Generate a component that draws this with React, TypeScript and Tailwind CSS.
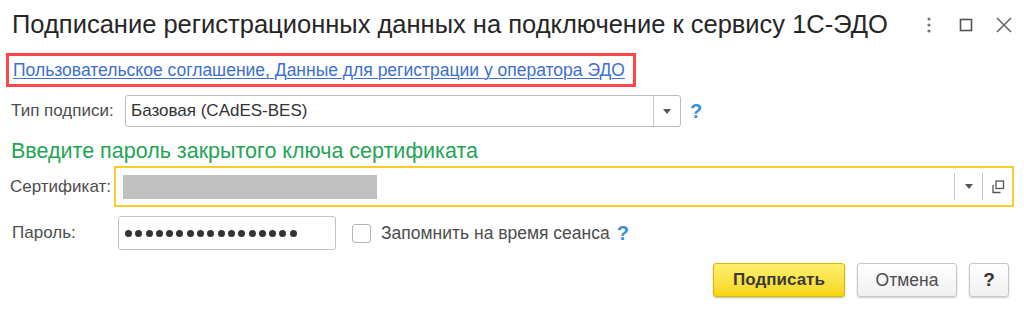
import { useState } from "react";

const font = { fontFamily: '"Liberation Sans", Arial, sans-serif' };

const Caret = () => (
  <svg width="8" height="5" viewBox="0 0 8 5">
    <path d="M0 0h8L4 5z" fill="#555" />
  </svg>
);

const Help = ({ className = "" }: { className?: string }) => (
  <span className={`text-[20px] font-bold text-[#3d8fd6] ${className}`}>?</span>
);

const dots = Array.from({ length: 17 });

const App = () => {
  const [remember, setRemember] = useState<boolean>(false);

  return (
    <div className="w-[1024px] h-[309px] bg-white text-[#333] overflow-hidden" style={font}>
      {/* title bar */}
      <div className="flex h-[50px] items-center pl-[12px] pr-[8px]">
        <div className="flex-1 text-[25.5px] leading-[28px] text-[#262626] pb-[2px] whitespace-nowrap">
          Подписание регистрационных данных на подключение к сервису 1С-ЭДО
        </div>
        <div className="flex items-center">
          <svg width="24" height="24" viewBox="0 0 24 24" className="mr-[13px]">
            <circle cx="12" cy="6" r="1.6" fill="#777" />
            <circle cx="12" cy="12" r="1.6" fill="#777" />
            <circle cx="12" cy="18" r="1.6" fill="#777" />
          </svg>
          <svg width="24" height="24" viewBox="0 0 24 24" className="mr-[14px]">
            <rect x="6.5" y="6.5" width="11" height="11" fill="none" stroke="#555" strokeWidth="1.6" />
          </svg>
          <svg width="24" height="24" viewBox="0 0 24 24">
            <path d="M5 5l14 14M19 5L5 19" stroke="#666" strokeWidth="1.6" />
          </svg>
        </div>
      </div>

      {/* agreement link */}
      <div className="mt-[3px] ml-[6px] w-[630px] h-[34px] border-[3px] border-[#ff4646] flex items-center pl-[4px]">
        <a href="#" className="text-[17.5px] text-[#3c6fd1] underline underline-offset-2 decoration-1 whitespace-nowrap">
          Пользовательское соглашение, Данные для регистрации у оператора ЭДО
        </a>
      </div>

      {/* signature type */}
      <div className="flex items-center mt-[8px] h-[32px]">
        <div className="w-[125px] pl-[11px] text-[17px] text-[#4d4d4d]">Тип подписи:</div>
        <div className="flex w-[556px] h-[32px] border border-[#bdbdbd] rounded-[3px] bg-white">
          <div className="flex-1 flex items-center pl-[5px] text-[17px] text-[#333]">Базовая (CAdES-BES)</div>
          <div className="w-[27px] border-l border-[#c8c8c8] flex items-center justify-center">
            <Caret />
          </div>
        </div>
        <Help className="ml-[9px]" />
      </div>

      {/* hint */}
      <div className="mt-[12px] pl-[11px] text-[21.5px] leading-[24px] text-[#22a553] whitespace-nowrap">
        Введите пароль закрытого ключа сертификата
      </div>

      {/* certificate */}
      <div className="flex items-center mt-[3px]">
        <div className="w-[114px] pl-[10px] text-[17px] text-[#4d4d4d]">Сертификат:</div>
        <div className="flex w-[900px] h-[41px] border-2 border-[#fccb2e] bg-white">
          <div className="flex-1 flex items-center pl-[7px]">
            <div className="w-[254px] h-[24px] bg-[#c0c0c0]" />
          </div>
          <div className="flex items-center py-[5px]">
            <div className="w-[28px] h-full border-l border-[#c8c8c8] flex items-center justify-center">
              <Caret />
            </div>
            <div className="w-[30px] h-full border-l border-[#c8c8c8] flex items-center justify-center">
              <svg width="14" height="14" viewBox="0 0 14 14">
                <rect x="5" y="1" width="7.5" height="7.5" fill="none" stroke="#555" strokeWidth="1.3" />
                <path d="M2 5v7.5h7.5" fill="none" stroke="#555" strokeWidth="1.3" />
              </svg>
            </div>
          </div>
        </div>
      </div>

      {/* password */}
      <div className="flex items-center mt-[9px]">
        <div className="w-[118px] pl-[12px] text-[17px] text-[#4d4d4d]">Пароль:</div>
        <div className="w-[218px] h-[34px] border border-[#c4c4c4] rounded-[3px] flex items-center gap-[3.3px] pl-[6px]">
          {dots.map((_, i) => (
            <span key={i} className="w-[7px] h-[7px] rounded-full bg-[#333]" />
          ))}
        </div>
        <label className="flex items-center ml-[16px] cursor-pointer" onClick={() => setRemember(!remember)}>
          <span className="w-[19px] h-[19px] border border-[#b5b5b5] rounded-[3px] bg-white flex items-center justify-center text-[13px]">
            {remember ? "✓" : ""}
          </span>
          <span className="ml-[10px] text-[17.5px] text-[#4d4d4d]">Запомнить на время сеанса</span>
        </label>
        <Help className="ml-[7px]" />
      </div>

      {/* buttons */}
      <div className="flex justify-end gap-[12px] mt-[13px] pr-[15px]">
        <button className="w-[132px] h-[34px] rounded-[3px] border border-[#d8ba00] bg-gradient-to-b from-[#fff06b] to-[#f6d600] text-[17px] font-bold text-[#3a3a3a] shadow-[0_1px_2px_rgba(0,0,0,0.25)]">
          Подписать
        </button>
        <button className="w-[100px] h-[34px] rounded-[3px] border border-[#c8c8c8] bg-gradient-to-b from-white to-[#f0f0f0] text-[17.5px] text-[#4d4d4d] shadow-[0_1px_2px_rgba(0,0,0,0.2)]">
          Отмена
        </button>
        <button className="w-[40px] h-[34px] rounded-[3px] border border-[#c8c8c8] bg-gradient-to-b from-white to-[#f0f0f0] text-[19px] font-bold text-[#333] shadow-[0_1px_2px_rgba(0,0,0,0.2)]">
          ?
        </button>
      </div>
    </div>
  );
};

export default App;
